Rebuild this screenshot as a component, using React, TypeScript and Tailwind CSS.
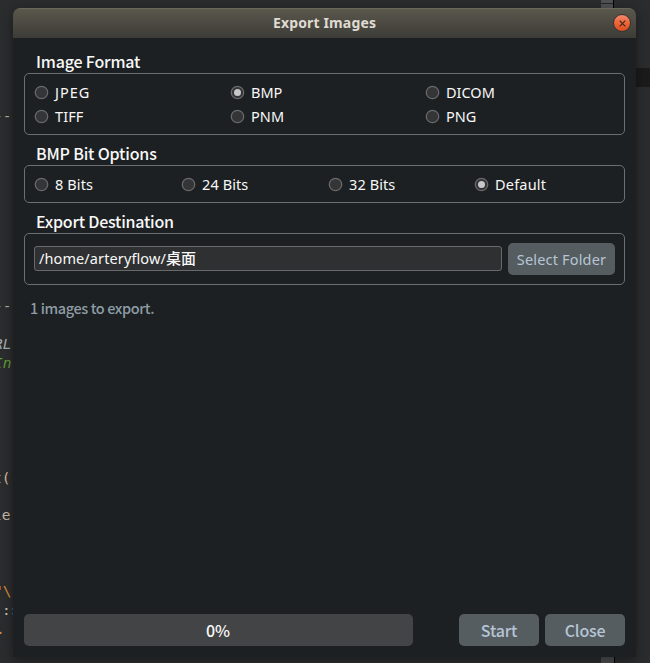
import React from 'react';

const uiFont = "font-['Noto_Sans','Open_Sans','Noto_Sans_CJK_SC',sans-serif]";
const headFont = "font-['Noto_Sans_CJK_SC',sans-serif]";

function Radio({ label, checked = false, className = 'tracking-[0.1px]' }: { label: string; checked?: boolean; className?: string }) {
  return (
    <label className={`flex h-6 text-[14.5px] leading-6 text-[#f8f8f8] ${uiFont} ${className}`}>
      <svg viewBox="0 0 15 15" className="mt-[5px] mr-[6px] size-[15px] shrink-0">
        <circle cx="7.5" cy="7.5" r="6.2" fill="#343536" stroke="#68696a" strokeWidth="1.3" />
        {checked && <circle cx="7.5" cy="7.5" r="3.5" fill="#c8c8ca" />}
      </svg>
      <span className="whitespace-nowrap">{label}</span>
      <input type="radio" className="sr-only" checked={checked} readOnly />
    </label>
  );
}

function Heading({ children, className = 'tracking-[-0.18px]' }: { children: string; className?: string }) {
  return <h2 className={`h-[23px] pl-3 text-[16px] leading-[23px] font-medium whitespace-nowrap text-[#f8f8f8] ${headFont} ${className}`}>{children}</h2>;
}

const box = 'rounded-[5px] border border-[#6c6f71]';
const button = 'flex h-8 items-center justify-center rounded-[5px] bg-[#555d60] whitespace-nowrap text-[#b5c5d5]';

function EditorBackdrop() {
  return (
    <div className="absolute inset-0 overflow-hidden bg-[#2b2c2d] font-['DejaVu_Sans_Mono',monospace] text-[14.5px] leading-5 whitespace-pre">
      <div className="absolute top-0 left-[601px] h-2 w-[13px] border-r border-black bg-[#515253]">
        <div className="mt-[3px] h-px bg-[#242526]" />
      </div>
      <div className="absolute top-[68px] left-[636px] h-[19px] w-[14px] bg-[#1b1b1b]" />
      <div className="absolute top-[657px] left-[601px] h-[6px] w-[14px] border-r border-black bg-[#4a4b4c]" />
      <span className="absolute top-[106px] left-[-6px] text-[#b8aea0]">--</span>
      <span className="absolute top-[296px] left-[-6px] text-[#b8aea0]">--</span>
      <span className="absolute top-[334px] left-[-6px] text-[#a2adb7] italic">RL</span>
      <span className="absolute top-[353px] left-[-6px] text-[#629b3b] italic">In</span>
      <span className="absolute top-[468px] left-[-7px] text-[#d3bb9d]">t(</span>
      <span className="absolute top-[505px] left-[-7px] text-[#c3b8aa]">le</span>
      <span className="absolute top-[581px] left-[-6px] text-[#d98a3d]">"\</span>
      <span className="absolute top-[600px] left-[2px] tracking-[-1.7px] text-[#c9c4b1]">
        :<span className="text-[#3f7186]">:</span>
      </span>
      <span className="absolute top-[619px] left-[-4px] text-[#c9974a]">.</span>
    </div>
  );
}

export default function App() {
  return (
    <div className="relative h-[663px] w-[650px] overflow-hidden">
      <EditorBackdrop />
      <main className="absolute top-2 left-[13px] flex h-[649px] w-[623px] flex-col overflow-hidden rounded-t-[7px] bg-[#1c2022] shadow-[0_3px_12px_rgba(0,0,0,0.4)]">
        <header className="relative flex h-[30px] shrink-0 items-center justify-center border-t border-[#69665a] bg-linear-to-b from-[#5a574c] to-[#3d3c37]">
          <h1 className={`-mt-px text-[14px] leading-[28px] font-bold tracking-[0.15px] text-[#dfdbd2] ${uiFont}`}>Export Images</h1>
          <button aria-label="Close window" className="absolute top-[5px] right-[5px] flex size-[18px] items-center justify-center rounded-full border border-[#35332e] bg-linear-to-b from-[#f3896b] via-[#ed6538] to-[#dc4d1d]">
            <svg viewBox="0 0 7 7" className="size-[7px]" stroke="#40291b" strokeWidth="1.2">
              <path d="M.7.7 6.3 6.3M6.3.7.7 6.3" />
            </svg>
          </button>
        </header>
        <div className="flex grow flex-col px-[11px] pt-3 pb-[11px]">
          <Heading>Image Format</Heading>
          <section className={`${box} grid h-[62px] shrink-0 grid-cols-[196px_195px_1fr] content-start pt-[6px] pl-[9px]`}>
            <Radio label="JPEG" className="tracking-[1px]" />
            <Radio label="BMP" checked className="tracking-[0px]" />
            <Radio label="DICOM" className="tracking-[0px]" />
            <Radio label="TIFF" />
            <Radio label="PNM" />
            <Radio label="PNG" className="tracking-[0px]" />
          </section>
          <div className="h-[7px]" />
          <Heading>BMP Bit Options</Heading>
          <section className={`${box} grid h-[38px] shrink-0 grid-cols-[147px_147px_146px_1fr] content-start pt-[6px] pl-[9px]`}>
            <Radio label="8 Bits" />
            <Radio label="24 Bits" />
            <Radio label="32 Bits" />
            <Radio label="Default" checked className="tracking-[0.2px]" />
          </section>
          <div className="h-[7px]" />
          <Heading className="tracking-[-0.23px]">Export Destination</Heading>
          <section className={`${box} flex h-[52px] shrink-0 items-center gap-[6px] px-[9px]`}>
            <div className={`-mt-px flex h-[25px] w-[468px] rounded-[3px] border border-[#68696a] bg-[#2f3031] pl-1 text-[14.5px] leading-[23px] text-[#f8f8f8] ${uiFont}`}>
              <span className="tracking-[0.1px]">/home/arteryflow/</span>
              <span className={`-mt-px text-[15px] font-medium ${headFont}`}>桌面</span>
            </div>
            <button className={`${button} w-[107px] pt-px text-[14.5px] tracking-[0.17px] ${uiFont}`}>Select Folder</button>
          </section>
          <p className={`mt-[11px] pl-[6px] text-[14.5px] leading-6 font-medium tracking-[-0.4px] text-[#8e9ca5] ${headFont}`}>1 images to export.</p>
          <footer className={`mt-auto flex text-[16px] font-medium ${headFont}`}>
            <div className="flex h-8 w-[389px] items-center justify-center rounded-[5px] bg-[#434445] pr-px text-[#f8f8f8]">0%</div>
            <button className={`${button} ml-auto w-20 tracking-[-0.2px]`}>Start</button>
            <button className={`${button} ml-[6px] w-20 tracking-[-0.2px]`}>Close</button>
          </footer>
        </div>
      </main>
    </div>
  );
}
